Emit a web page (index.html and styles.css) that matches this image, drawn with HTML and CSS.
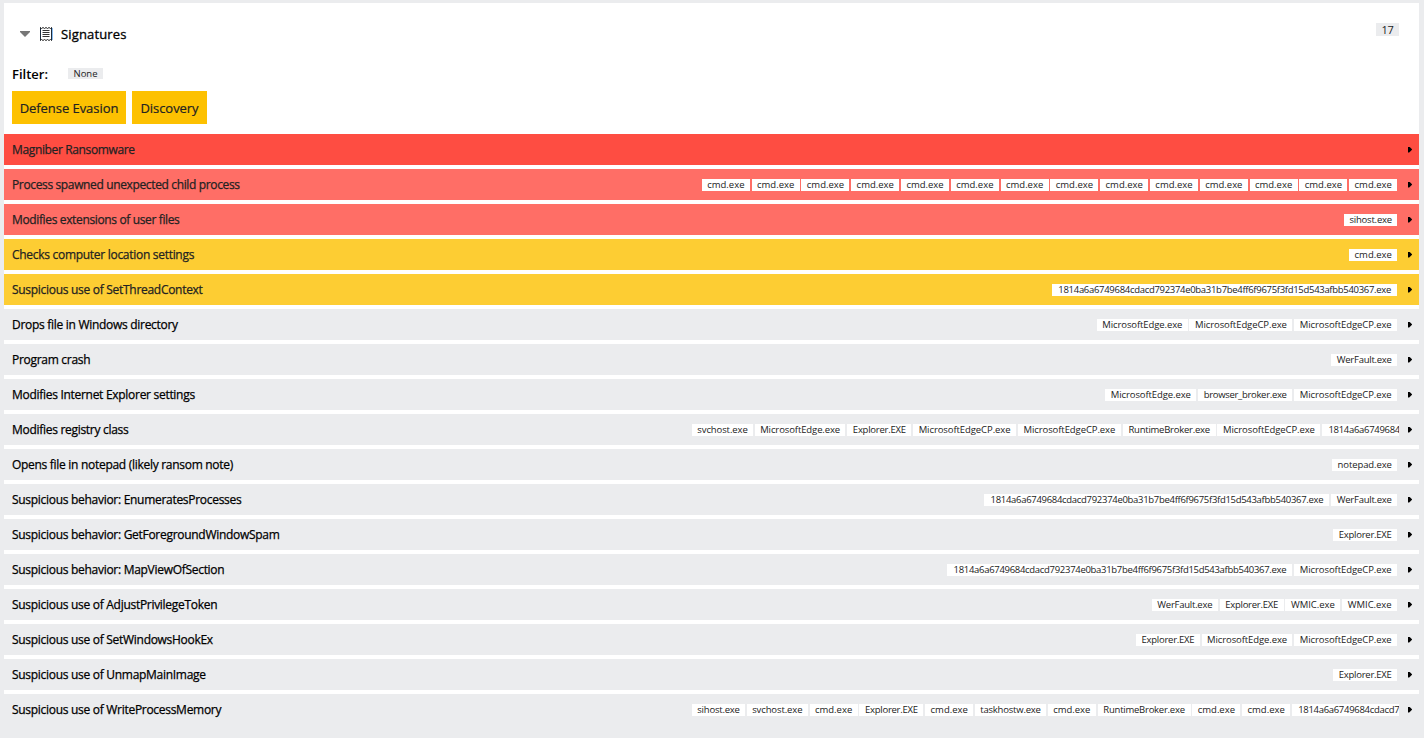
FILE: index.html
```html
<!DOCTYPE html>
<html lang="en">
<head>
<meta charset="utf-8">
<title>Signatures</title>
<link rel="stylesheet" href="styles.css">
</head>
<body>
<main class="panel">
<header class="head">
<svg class="caret" viewBox="0 0 10 6"><path d="M0 0h10v1L5 6 0 1z" fill="#777"/></svg>
<svg class="receipt" viewBox="0 0 14 14" fill="none"><path d="M1.5 .5v13M12.5 .5v13" stroke="#1c2b3d"/><path d="M1 .5l1.5 1 1.5-1 1.5 1L7 .5l1.5 1 1.5-1 1.5 1 1.5-1M1 13.5l1.5-1 1.5 1 1.5-1 1.5 1 1.5-1 1.5 1 1.5-1 1.5 1" stroke="#222"/><path d="M3.5 3.5h7M3.5 5.5h7M3.5 7.5h7M3.5 9.5h7" stroke="#333"/><path d="M13.5 1v12" stroke="#8bbdf0"/></svg>
<h1 class="heading">Signatures</h1><span class="count">17</span>
</header>
<div class="filter"><span class="filter-label">Filter:</span><span class="none">None</span></div>
<div class="tactics"><button class="tactic evasion">Defense Evasion</button><button class="tactic discovery">Discovery</button></div>
<section class="rows">
<div class="row critical"><span class="title">Magniber Ransomware</span><i class="arrow"></i></div>
<div class="row high"><span class="title">Process spawned unexpected child process</span><div class="tags"><span class="tag cmd">cmd.exe</span><span class="tag cmd">cmd.exe</span><span class="tag cmd">cmd.exe</span><span class="tag cmd">cmd.exe</span><span class="tag cmd">cmd.exe</span><span class="tag cmd">cmd.exe</span><span class="tag cmd">cmd.exe</span><span class="tag cmd">cmd.exe</span><span class="tag cmd">cmd.exe</span><span class="tag cmd">cmd.exe</span><span class="tag cmd">cmd.exe</span><span class="tag cmd">cmd.exe</span><span class="tag cmd">cmd.exe</span><span class="tag cmd">cmd.exe</span></div><i class="arrow"></i></div>
<div class="row high"><span class="title">Modifies extensions of user files</span><div class="tags"><span class="tag sihost">sihost.exe</span></div><i class="arrow"></i></div>
<div class="row medium"><span class="title">Checks computer location settings</span><div class="tags"><span class="tag cmd">cmd.exe</span></div><i class="arrow"></i></div>
<div class="row medium"><span class="title">Suspicious use of SetThreadContext</span><div class="tags"><span class="tag sample">1814a6a6749684cdacd792374e0ba31b7be4ff6f9675f3fd15d543afbb540367.exe</span></div><i class="arrow"></i></div>
<div class="row"><span class="title">Drops file in Windows directory</span><div class="tags"><span class="tag edge">MicrosoftEdge.exe</span><span class="tag edgecp">MicrosoftEdgeCP.exe</span><span class="tag edgecp">MicrosoftEdgeCP.exe</span></div><i class="arrow"></i></div>
<div class="row"><span class="title">Program crash</span><div class="tags"><span class="tag werfault">WerFault.exe</span></div><i class="arrow"></i></div>
<div class="row"><span class="title">Modifies Internet Explorer settings</span><div class="tags"><span class="tag edge">MicrosoftEdge.exe</span><span class="tag browser">browser_broker.exe</span><span class="tag edgecp">MicrosoftEdgeCP.exe</span></div><i class="arrow"></i></div>
<div class="row"><span class="title">Modifies registry class</span><div class="tags"><span class="tag svchost">svchost.exe</span><span class="tag edge">MicrosoftEdge.exe</span><span class="tag explorer">Explorer.EXE</span><span class="tag edgecp">MicrosoftEdgeCP.exe</span><span class="tag edgecp">MicrosoftEdgeCP.exe</span><span class="tag runtime">RuntimeBroker.exe</span><span class="tag edgecp">MicrosoftEdgeCP.exe</span><span class="tag sample">1814a6a6749684cdacd792374e0ba31b7be4ff6f9675f3fd15d543afbb540367.exe</span></div><i class="arrow"></i></div>
<div class="row"><span class="title">Opens file in notepad (likely ransom note)</span><div class="tags"><span class="tag notepad">notepad.exe</span></div><i class="arrow"></i></div>
<div class="row"><span class="title">Suspicious behavior: EnumeratesProcesses</span><div class="tags"><span class="tag sample">1814a6a6749684cdacd792374e0ba31b7be4ff6f9675f3fd15d543afbb540367.exe</span><span class="tag werfault">WerFault.exe</span></div><i class="arrow"></i></div>
<div class="row"><span class="title">Suspicious behavior: GetForegroundWindowSpam</span><div class="tags"><span class="tag explorer">Explorer.EXE</span></div><i class="arrow"></i></div>
<div class="row"><span class="title">Suspicious behavior: MapViewOfSection</span><div class="tags"><span class="tag sample">1814a6a6749684cdacd792374e0ba31b7be4ff6f9675f3fd15d543afbb540367.exe</span><span class="tag edgecp">MicrosoftEdgeCP.exe</span></div><i class="arrow"></i></div>
<div class="row"><span class="title">Suspicious use of AdjustPrivilegeToken</span><div class="tags"><span class="tag werfault">WerFault.exe</span><span class="tag explorer">Explorer.EXE</span><span class="tag wmic">WMIC.exe</span><span class="tag wmic">WMIC.exe</span></div><i class="arrow"></i></div>
<div class="row"><span class="title">Suspicious use of SetWindowsHookEx</span><div class="tags"><span class="tag explorer">Explorer.EXE</span><span class="tag edge">MicrosoftEdge.exe</span><span class="tag edgecp">MicrosoftEdgeCP.exe</span></div><i class="arrow"></i></div>
<div class="row"><span class="title">Suspicious use of UnmapMainImage</span><div class="tags"><span class="tag explorer">Explorer.EXE</span></div><i class="arrow"></i></div>
<div class="row"><span class="title">Suspicious use of WriteProcessMemory</span><div class="tags"><span class="tag sihost">sihost.exe</span><span class="tag svchost">svchost.exe</span><span class="tag cmd">cmd.exe</span><span class="tag explorer">Explorer.EXE</span><span class="tag cmd">cmd.exe</span><span class="tag taskhost">taskhostw.exe</span><span class="tag cmd">cmd.exe</span><span class="tag runtime">RuntimeBroker.exe</span><span class="tag cmd">cmd.exe</span><span class="tag cmd">cmd.exe</span><span class="tag sample">1814a6a6749684cdacd792374e0ba31b7be4ff6f9675f3fd15d543afbb540367.exe</span></div><i class="arrow"></i></div>
</section>
</main>
</body>
</html>
```
FILE: styles.css
```css
* { box-sizing: border-box; }
html, body { margin: 0; height: 738px; overflow: hidden; }
body { background: #ebecee; font-family: "Open Sans", "Noto Sans", sans-serif; color: #000; padding: 3px 5px 0 4px; }
.panel { background: #fff; height: 722px; }
.head { display: flex; align-items: center; height: 62px; padding: 0 20px 0 16px; }
.caret { width: 10px; height: 6px; margin-right: 9px; }
.receipt { width: 14px; height: 14px; margin-right: 8px; }
.heading { margin: 0; font-size: 13px; font-weight: 500; line-height: 18px; letter-spacing: .15px; -webkit-text-stroke: .3px; }
.count { margin: -9px 0 0 auto; width: 23px; height: 13px; line-height: 13px; text-align: center; background: #ebecee; font-size: 11px; letter-spacing: -.3px; color: #222; }
.filter { display: flex; align-items: center; height: 18px; padding-left: 8px; }
.filter-label { width: 56px; font-size: 13px; font-weight: 600; }
.none { width: 35px; height: 11px; margin-top: -1px; line-height: 12px; font-size: 9.5px; text-align: center; background: #ebecee; color: #222; }
.tactics { display: flex; gap: 6px; padding: 8px 8px 10px; }
.tactic { height: 33px; border: 0; padding: 2px 0 0; background: #fdc101; color: #222; font: 500 13px/31px "Open Sans", sans-serif; letter-spacing: -.05px; -webkit-text-stroke: .2px; white-space: nowrap; }
.evasion { width: 114px; }
.discovery { width: 75px; }
.rows { display: flex; flex-direction: column; gap: 4px; }
.row { display: flex; align-items: center; height: 31px; padding: 0 7px 0 8px; background: #ebecee; }
.critical { background: #fe4d42; color: #222; }
.high { background: #ff6e66; color: #222; }
.medium { background: #fdcd33; color: #222; }
.title { font-size: 12px; font-weight: 500; letter-spacing: -.29px; -webkit-text-stroke: .25px; white-space: nowrap; }
.critical .title, .high .title { letter-spacing: -.36px; }
.tags { display: flex; margin-left: auto; max-width: 707px; overflow: hidden; }
.tag { flex: none; height: 12px; line-height: 12px; margin-right: 1.8px; background: #fff; color: #222; font-size: 9.5px; text-align: center; white-space: nowrap; }
.arrow { width: 4px; height: 6px; margin-left: auto; background: #000; clip-path: polygon(0 0, 30% 0, 100% 45%, 100% 55%, 30% 100%, 0 100%); }
.tags + .arrow { margin-left: 9px; }
.cmd { width: 48px; }
.sihost { width: 53px; letter-spacing: -.2px; }
.svchost { width: 61px; letter-spacing: -.1px; }
.edge { width: 90.7px; letter-spacing: -.1px; }
.edgecp { width: 103px; letter-spacing: -.08px; }
.explorer { width: 64px; letter-spacing: -.25px; }
.runtime { width: 93px; letter-spacing: -.24px; }
.sample { width: 345px; letter-spacing: -.3px; }
.werfault { width: 66px; letter-spacing: -.25px; }
.browser { width: 94.5px; letter-spacing: -.3px; }
.notepad { width: 65px; letter-spacing: -.1px; }
.taskhost { width: 71px; letter-spacing: -.2px; }
.wmic { width: 55px; letter-spacing: -.05px; }
```
